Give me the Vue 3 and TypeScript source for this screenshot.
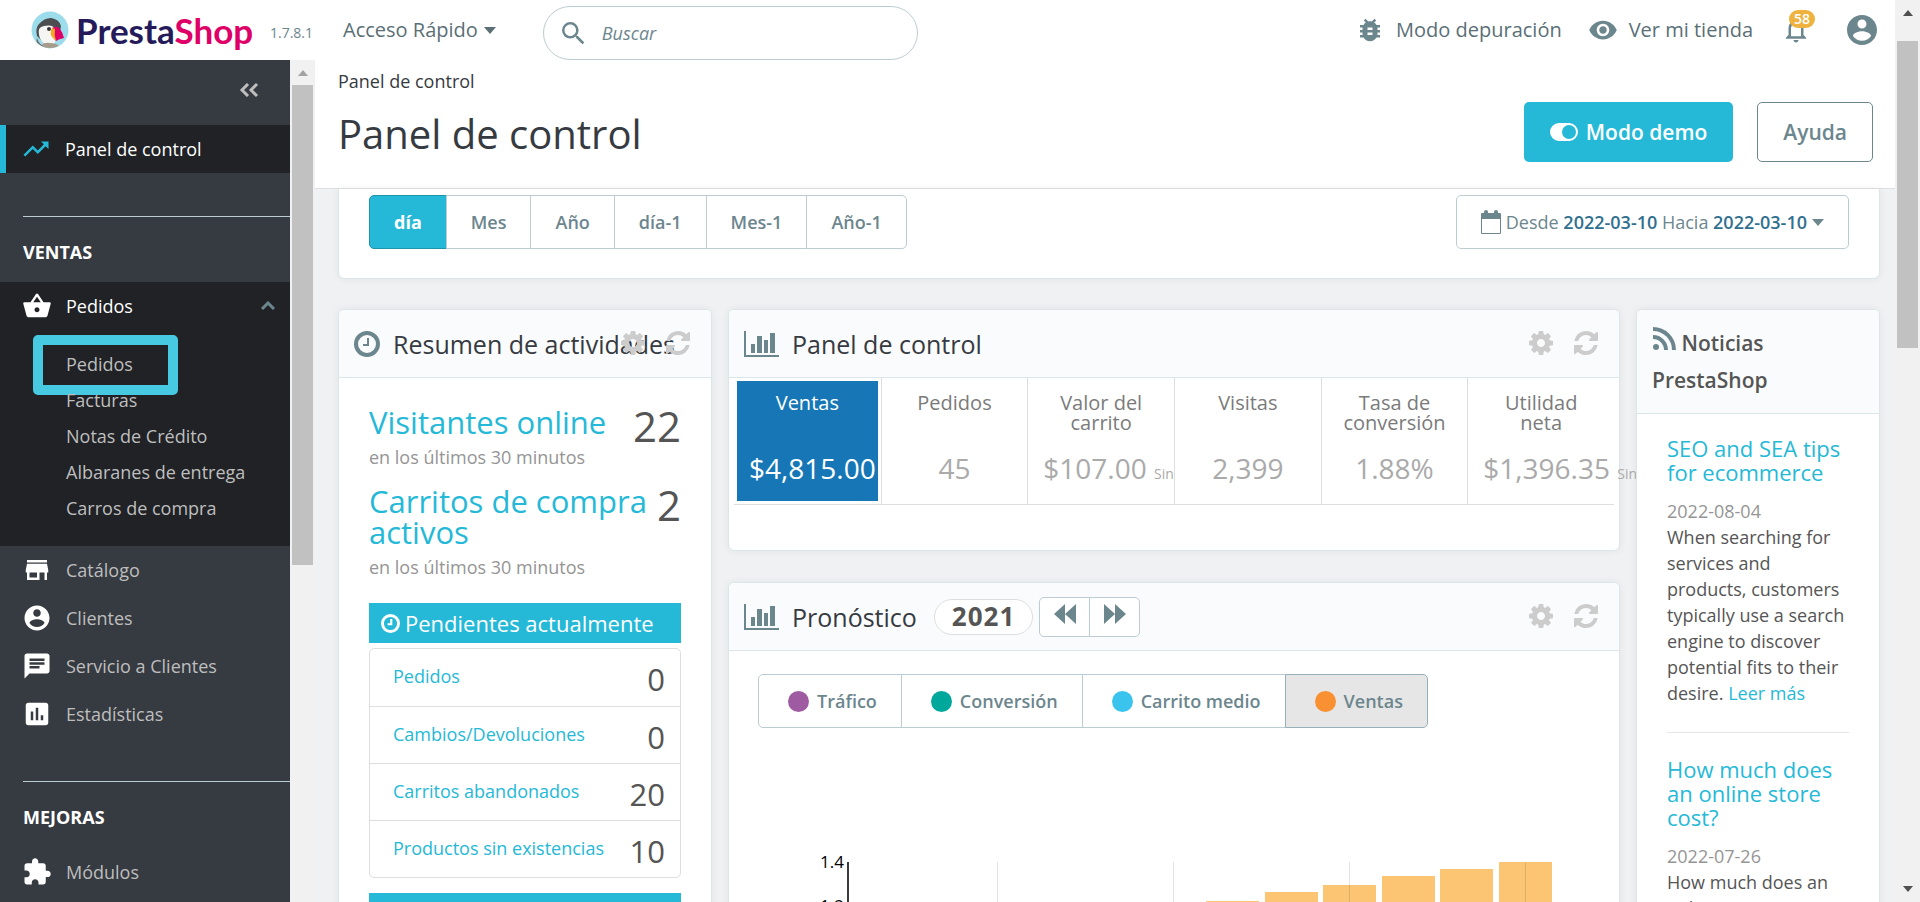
<script setup lang="ts">
interface MenuItem { label: string; icon: string }
interface Kpi { label: string; value: string; note?: string; active?: boolean }

const icons: Record<string, string> = {
  trending: 'M16 6l2.29 2.29-4.88 4.88-4-4L2 16.59 3.41 18l6-6 4 4 6.3-6.29L22 12V6z',
  basket: 'M17.21 9l-4.38-6.56c-.19-.28-.51-.42-.83-.42-.32 0-.64.14-.83.43L6.79 9H2c-.55 0-1 .45-1 1 0 .09.01.18.04.27l2.54 9.27c.23.84 1 1.46 1.92 1.46h13c.92 0 1.69-.62 1.93-1.46l2.54-9.27L23 10c0-.55-.45-1-1-1h-4.79zM9 9l3-4.4L15 9H9zm3 8c-1.1 0-2-.9-2-2s.9-2 2-2 2 .9 2 2-.9 2-2 2z',
  store: 'M20 4H4v2h16V4zm1 10v-2l-1-5H4l-1 5v2h1v6h10v-6h4v6h2v-6h1zm-9 4H6v-4h6v4z',
  account: 'M12 2C6.48 2 2 6.48 2 12s4.48 10 10 10 10-4.48 10-10S17.52 2 12 2zm0 3c1.66 0 3 1.34 3 3s-1.34 3-3 3-3-1.34-3-3 1.34-3 3-3zm0 14.2c-2.5 0-4.71-1.28-6-3.22.03-1.99 4-3.08 6-3.08 1.99 0 5.97 1.09 6 3.08-1.29 1.94-3.5 3.22-6 3.22z',
  chat: 'M20 2H4c-1.1 0-1.99.9-1.99 2L2 22l4-4h14c1.1 0 2-.9 2-2V4c0-1.1-.9-2-2-2zM6 9h12v2H6V9zm8 5H6v-2h8v2zm4-6H6V6h12v2z',
  stats: 'M19 3H5c-1.1 0-2 .9-2 2v14c0 1.1.9 2 2 2h14c1.1 0 2-.9 2-2V5c0-1.1-.9-2-2-2zM9 17H7v-7h2v7zm4 0h-2V7h2v10zm4 0h-2v-4h2v4z',
  module: 'M20.5 11H19V7c0-1.1-.9-2-2-2h-4V3.5C13 2.12 11.88 1 10.5 1S8 2.12 8 3.5V5H4c-1.1 0-1.99.9-1.99 2v3.8H3.5c1.49 0 2.7 1.21 2.7 2.7s-1.21 2.7-2.7 2.7H2V20c0 1.1.9 2 2 2h3.8v-1.5c0-1.49 1.21-2.7 2.7-2.7 1.49 0 2.7 1.21 2.7 2.7V22H17c1.1 0 2-.9 2-2v-4h1.5c1.38 0 2.5-1.12 2.5-2.5S21.88 11 20.5 11z',
  bug: 'M20 8h-2.81c-.45-.78-1.07-1.45-1.82-1.96L17 4.41 15.59 3l-2.17 2.17C12.96 5.06 12.49 5 12 5c-.49 0-.96.06-1.41.17L8.41 3 7 4.41l1.62 1.63C7.88 6.55 7.26 7.22 6.81 8H4v2h2.09c-.05.33-.09.66-.09 1v1H4v2h2v1c0 .34.04.67.09 1H4v2h2.81c1.04 1.79 2.97 3 5.19 3s4.15-1.21 5.19-3H20v-2h-2.09c.05-.33.09-.66.09-1v-1h2v-2h-2v-1c0-.34-.04-.67-.09-1H20V8zm-6 8h-4v-2h4v2zm0-4h-4v-2h4v2z',
  eye: 'M12 4.5C7 4.5 2.73 7.61 1 12c1.73 4.39 6 7.5 11 7.5s9.27-3.11 11-7.5c-1.73-4.39-6-7.5-11-7.5zM12 17c-2.76 0-5-2.24-5-5s2.24-5 5-5 5 2.24 5 5-2.24 5-5 5zm0-8c-1.66 0-3 1.34-3 3s1.34 3 3 3 3-1.34 3-3-1.34-3-3-3z',
  bell: 'M12 22c1.1 0 2-.9 2-2h-4c0 1.1.89 2 2 2zm6-6v-5c0-3.07-1.64-5.64-4.5-6.32V4c0-.83-.67-1.5-1.5-1.5s-1.5.67-1.5 1.5v.68C7.63 5.36 6 7.92 6 11v5l-2 2v1h16v-1l-2-2zm-2 1H8v-6c0-2.48 1.51-4.5 4-4.5s4 2.02 4 4.5v6z',
  search: 'M15.5 14h-.79l-.28-.27A6.471 6.471 0 0 0 16 9.5 6.5 6.5 0 1 0 9.5 16c1.61 0 3.09-.59 4.23-1.57l.27.28v.79l5 4.99L20.49 19l-4.99-5zm-6 0C7.01 14 5 11.99 5 9.5S7.01 5 9.5 5 14 7.01 14 9.5 11.99 14 9.5 14z',
}
const cog = 'M1024 896q0-106-75-181t-181-75-181 75-75 181 75 181 181 75 181-75 75-181zm512-109v222q0 12-8 23t-20 13l-185 28q-19 54-39 91 35 50 107 138 10 12 10 25t-9 23q-27 37-99 108t-94 71q-12 0-26-9l-138-108q-44 23-91 38-16 136-29 186-7 28-36 28h-222q-14 0-24.500-8.500t-11.500-21.500l-28-184q-49-16-90-37l-141 107q-10 9-25 9-14 0-25-11-126-114-165-168-7-10-7-23 0-12 8-23 15-21 51-66.500t54-70.500q-27-50-41-99l-183-27q-13-2-21-12.500t-8-23.500v-222q0-12 8-23t19-13l186-28q14-46 39-92-40-57-107-138-10-12-10-24 0-10 9-23 26-36 98.500-107.500t94.500-71.500q13 0 26 10l138 107q44-23 91-38 16-136 29-186 7-28 36-28h222q14 0 24.500 8.500t11.500 21.500l28 184q49 16 90 37l142-107q9-9 24-9 13 0 25 10 129 119 165 170 7 8 7 22 0 12-8 23-15 21-51 66.500t-54 70.500q26 50 41 98l183 28q13 2 21 12.500t8 23.500z'
const refresh = 'M1511 1056q0 5-1 7-64 268-268 434.500t-478 166.500q-146 0-282.500-55t-243.500-157l-129 129q-19 19-45 19t-45-19-19-45v-448q0-26 19-45t45-19h448q26 0 45 19t19 45-19 45l-137 137q71 66 161 102t187 36q134 0 250-65t186-179q11-17 53-117 8-23 30-23h192q13 0 22.500 9.500t9.500 22.500zm25-800v448q0 26-19 45t-45 19h-448q-26 0-45-19t-19-45 19-45l138-138q-148-137-349-137-134 0-250 65t-186 179q-11 17-53 117-8 23-30 23h-199q-13 0-22.500-9.500t-9.500-22.500v-7q65-268 270-434.500t480-166.500q146 0 284 55.500t245 156.500l130-129q19-19 45-19t45 19 19 45z'

const submenu = ['Pedidos', 'Facturas', 'Notas de Crédito', 'Albaranes de entrega', 'Carros de compra']
const sellMenu: MenuItem[] = [
  { label: 'Catálogo', icon: 'store' },
  { label: 'Clientes', icon: 'account' },
  { label: 'Servicio a Clientes', icon: 'chat' },
  { label: 'Estadísticas', icon: 'stats' },
]
const ranges = ['día', 'Mes', 'Año', 'día-1', 'Mes-1', 'Año-1']
const pending = [
  { label: 'Pedidos', count: 0 },
  { label: 'Cambios/Devoluciones', count: 0 },
  { label: 'Carritos abandonados', count: 20 },
  { label: 'Productos sin existencias', count: 10 },
]
const kpis: Kpi[] = [
  { label: 'Ventas', value: '$4,815.00', active: true },
  { label: 'Pedidos', value: '45' },
  { label: 'Valor del carrito', value: '$107.00', note: 'Sin' },
  { label: 'Visitas', value: '2,399' },
  { label: 'Tasa de conversión', value: '1.88%' },
  { label: 'Utilidad neta', value: '$1,396.35', note: 'Sin' },
]
const series = [
  { label: 'Tráfico', tone: 'purple' },
  { label: 'Conversión', tone: 'green' },
  { label: 'Carrito medio', tone: 'blue' },
  { label: 'Ventas', tone: 'orange' },
]
const chartTop = 30
const bars = [39, 30, 23, 14, 7, 0].map((drop, i) => ({ x: 448 + Math.round(i * 58.6), y: chartTop + drop }))
const gridLines = [239, 415, 591, 767]
const news = [
  { title: 'SEO and SEA tips for ecommerce', date: '2022-08-04', text: 'When searching for services and products, customers typically use a search engine to discover potential fits to their desire.', more: true },
  { title: 'How much does an online store cost?', date: '2022-07-26', text: 'How much does an online store cost?', more: false },
]
</script>

<template>
  <div class="screen">
    <div class="page">
      <header class="topbar">
        <a href="#" class="brand" aria-label="PrestaShop">
          <svg class="puffin" viewBox="0 0 38 38" aria-hidden="true">
            <defs><clipPath id="disc"><circle cx="19" cy="19" r="18" /></clipPath></defs>
            <circle cx="19" cy="19" r="18.500" fill="#9ddcea" />
            <g clip-path="url(#disc)">
              <path d="M6 25q-2-8 2-12 5-6 12-6 8 1 10 8l-1 6q-3 8-8 12h-7z" fill="#4b4d50" />
              <path d="M8 24q-2-8 5-9 9-2 13 4 1 9-4 15h-7q-6-4-7-10z" fill="#f5f5f3" />
              <path d="M10 35q2-4 9-3 6 0 9 3v3H9z" fill="#a79c8b" />
              <path d="M6 27q2 6 6 8l-4 1q-4-4-2-9z" fill="#6d6d6b" />
              <path d="M21 17q5-3 8 1 3 4 4 9-5 1-8 3-5-6-4-13z" fill="#df0067" />
              <path d="M21 17q-3 6 1 10l3 3q-2-6-1-12z" fill="#f5a623" />
            </g>
            <circle cx="18" cy="18" r="2" fill="#33343a" />
          </svg>
          <span class="wordmark">Presta<span class="pink">Shop</span></span>
        </a>
        <span class="version">1.7.8.1</span>
        <button type="button" class="quick">Acceso Rápido <span class="caret"></span></button>
        <label class="search">
          <svg viewBox="3 3 18 18" aria-hidden="true"><path :d="icons.search" /></svg>
          <input type="text" placeholder="Buscar" aria-label="Buscar" />
        </label>
        <nav class="tools">
          <a href="#" class="tool debug"><svg viewBox="0 0 24 24" aria-hidden="true"><path :d="icons.bug" /></svg>Modo depuración</a>
          <a href="#" class="tool shop"><svg viewBox="0 0 24 24" aria-hidden="true"><path :d="icons.eye" /></svg>Ver mi tienda</a>
          <button type="button" class="bell" aria-label="Notificaciones">
            <svg viewBox="0 0 24 24" aria-hidden="true"><path :d="icons.bell" /></svg>
            <span class="badge">58</span>
          </button>
          <button type="button" class="avatar" aria-label="Cuenta"><svg viewBox="2 2 20 20" aria-hidden="true"><path :d="icons.account" /></svg></button>
        </nav>
      </header>

      <div class="body">
        <aside class="sidebar">
          <button type="button" class="collapse" aria-label="Contraer menú">
            <svg viewBox="0 0 20 14" aria-hidden="true"><path d="M9 1L3 7l6 6M18 1l-6 6 6 6" /></svg>
          </button>
          <a href="#" class="item current"><svg class="ico" viewBox="0 0 24 24" aria-hidden="true"><path :d="icons.trending" /></svg>Panel de control</a>
          <h2 class="section">VENTAS</h2>
          <div class="open">
            <a href="#" class="item white"><svg class="ico" viewBox="0 0 24 24" aria-hidden="true"><path :d="icons.basket" /></svg>Pedidos
              <svg class="chevron" viewBox="0 0 16 10" aria-hidden="true"><path d="M2 8l6-6 6 6" /></svg>
            </a>
            <ul class="sub">
              <li v-for="(s, i) in submenu" :key="s"><a href="#">{{ s }}</a><span v-if="i === 0" class="marker"></span></li>
            </ul>
          </div>
          <a v-for="m in sellMenu" :key="m.label" href="#" class="item"><svg class="ico" viewBox="0 0 24 24" aria-hidden="true"><path :d="icons[m.icon]" /></svg>{{ m.label }}</a>
          <h2 class="section second">MEJORAS</h2>
          <a href="#" class="item"><svg class="ico" viewBox="0 0 24 24" aria-hidden="true"><path :d="icons.module" /></svg>Módulos</a>
        </aside>
        <div class="scroll side" aria-hidden="true"><span class="arrow up pale"></span><span class="thumb"></span></div>

        <main class="main">
          <div class="pagehead">
            <div>
              <div class="crumb">Panel de control</div>
              <h1>Panel de control</h1>
            </div>
            <div class="actions">
              <button type="button" class="btn primary">
                <svg viewBox="0 0 28 18" aria-hidden="true"><path fill-rule="evenodd" d="M9 0h10a9 9 0 0 1 0 18H9A9 9 0 0 1 9 0zm10 2a7 7 0 1 0 0 14 7 7 0 0 0 0-14z" /></svg>
                Modo demo
              </button>
              <button type="button" class="btn ghost">Ayuda</button>
            </div>
          </div>

          <div class="content">
            <section class="panel filter">
              <div class="group">
                <button v-for="(r, i) in ranges" :key="r" type="button" :class="{ on: i === 0 }">{{ r }}</button>
              </div>
              <button type="button" class="date">
                <svg viewBox="0 0 20 24" aria-hidden="true"><path fill-rule="evenodd" d="M1 3h18a1 1 0 0 1 1 1v19a1 1 0 0 1-1 1H1a1 1 0 0 1-1-1V4a1 1 0 0 1 1-1zm0 6v14h18V9z" /><rect x="3" y="0" width="4" height="6" rx="2" /><rect x="13" y="0" width="4" height="6" rx="2" /></svg>
                <span>Desde <strong>2022-03-10</strong> Hacia <strong>2022-03-10</strong></span>
                <span class="caret"></span>
              </button>
            </section>

            <div class="columns">
              <section class="panel">
                <header class="phead">
                  <svg class="clock" viewBox="0 0 26 26" aria-hidden="true"><circle cx="13" cy="13" r="11" /><path d="M14 7v7H9" /></svg>
                  <h3>Resumen de actividades</h3>
                  <div class="pact">
                    <button type="button" aria-label="Configurar"><svg viewBox="0 128 1536 1536" aria-hidden="true"><path :d="cog" /></svg></button>
                    <button type="button" aria-label="Actualizar"><svg viewBox="0 128 1536 1536" aria-hidden="true"><path :d="refresh" /></svg></button>
                  </div>
                </header>
                <div class="activity">
                  <div class="stat">
                    <div><a href="#">Visitantes online</a><small>en los últimos 30 minutos</small></div><strong>22</strong>
                  </div>
                  <div class="stat">
                    <div><a href="#">Carritos de compra activos</a><small>en los últimos 30 minutos</small></div><strong>2</strong>
                  </div>
                  <h4 class="bar">
                    <svg class="clock" viewBox="0 0 26 26" aria-hidden="true"><circle cx="13" cy="13" r="11" /><path d="M14 7v7H9" /></svg>Pendientes actualmente
                  </h4>
                  <ul class="list">
                    <li v-for="p in pending" :key="p.label"><a href="#">{{ p.label }}</a><span>{{ p.count }}</span></li>
                  </ul>
                  <h4 class="bar"></h4>
                </div>
              </section>

              <div class="middle">
                <section class="panel">
                  <header class="phead">
                    <svg class="chartico" viewBox="0 0 35 26" aria-hidden="true"><path d="M0 0h2v24h33v2H0zM7 13h4v9H7zM13 5h5v17h-5zM20 9h4v13h-4zM26 2h5v20h-5z" /></svg>
                    <h3>Panel de control</h3>
                    <div class="pact">
                      <button type="button" aria-label="Configurar"><svg viewBox="0 128 1536 1536" aria-hidden="true"><path :d="cog" /></svg></button>
                      <button type="button" aria-label="Actualizar"><svg viewBox="0 128 1536 1536" aria-hidden="true"><path :d="refresh" /></svg></button>
                    </div>
                  </header>
                  <dl class="kpis">
                    <div v-for="k in kpis" :key="k.label" class="cell">
                      <div class="kpi" :class="{ on: k.active }">
                        <dt>{{ k.label }}</dt>
                        <dd>{{ k.value }} <small v-if="k.note">{{ k.note }}</small></dd>
                      </div>
                    </div>
                  </dl>
                </section>

                <section class="panel">
                  <header class="phead">
                    <svg class="chartico" viewBox="0 0 35 26" aria-hidden="true"><path d="M0 0h2v24h33v2H0zM7 13h4v9H7zM13 5h5v17h-5zM20 9h4v13h-4zM26 2h5v20h-5z" /></svg>
                    <h3>Pronóstico</h3>
                    <span class="year">2021</span>
                    <div class="pager">
                      <button type="button" aria-label="Año anterior"><svg viewBox="0 0 22 20" aria-hidden="true"><path d="M11 0v20L0 10zM22 0v20L11 10z" /></svg></button>
                      <button type="button" aria-label="Año siguiente"><svg viewBox="0 0 22 20" aria-hidden="true"><path d="M0 0v20l11-10zM11 0v20l11-10z" /></svg></button>
                    </div>
                    <div class="pact">
                      <button type="button" aria-label="Configurar"><svg viewBox="0 128 1536 1536" aria-hidden="true"><path :d="cog" /></svg></button>
                      <button type="button" aria-label="Actualizar"><svg viewBox="0 128 1536 1536" aria-hidden="true"><path :d="refresh" /></svg></button>
                    </div>
                  </header>
                  <div class="forecast">
                    <div class="tabs">
                      <button v-for="s in series" :key="s.label" type="button" :class="{ on: s.tone === 'orange' }"><i :class="s.tone"></i>{{ s.label }}</button>
                    </div>
                    <svg class="chart" viewBox="0 0 832 260" role="img" aria-label="Ventas por mes">
                      <text x="86" y="36" text-anchor="end">1.4</text>
                      <text x="86" y="80" text-anchor="end">1.2</text>
                      <rect v-for="b in bars" :key="b.x" :x="b.x" :y="b.y" width="53" height="230" fill="#fbc573" />
                      <rect v-for="g in gridLines" :key="g" :x="g" :y="chartTop" width="1" height="230" fill="#000" fill-opacity="0.11" />
                      <rect x="89" :y="chartTop" width="2" height="230" fill="#3a3a3e" />
                    </svg>
                  </div>
                </section>
              </div>

              <section class="panel news">
                <header class="nhead">
                  <h3><svg viewBox="0 0 24 24" aria-hidden="true"><circle cx="4" cy="20" r="3" /><path d="M1 10a13 13 0 0 1 13 13M1 2a21 21 0 0 1 21 21" /></svg> Noticias PrestaShop</h3>
                </header>
                <article v-for="n in news" :key="n.date">
                  <h4><a href="#">{{ n.title }}</a></h4>
                  <time>{{ n.date }}</time>
                  <p>{{ n.text }} <a v-if="n.more" href="#">Leer más</a></p>
                </article>
              </section>
            </div>
          </div>
        </main>
      </div>
    </div>
    <div class="scroll win" aria-hidden="true"><span class="arrow up"></span><span class="thumb"></span><span class="arrow down"></span></div>
  </div>
</template>

<style>
body { margin: 0; overflow: hidden; }
</style>

<style scoped>
* { box-sizing: border-box; }
.screen { display: flex; height: 100vh; overflow: hidden; font-family: "Open Sans", "Noto Sans", sans-serif; font-size: 18px; line-height: 24px; color: #363a41; background: #eff1f2; }
.page { flex: 1; min-width: 0; display: flex; flex-direction: column; }
a { color: #25b9d7; text-decoration: none; }
button { font: inherit; color: inherit; background: none; border: 0; padding: 0; margin: 0; cursor: pointer; }
h1, h2, h3, h4, p, ul, dl, dd { margin: 0; padding: 0; font-weight: 400; }
ul { list-style: none; }
svg { display: block; fill: currentColor; flex: none; }

.topbar { display: flex; align-items: center; height: 60px; background: #fff; flex: none; color: #6c868e; padding-right: 18px; }
.brand { display: flex; align-items: center; gap: 7px; margin-left: 31px; }
.puffin { width: 38px; height: 38px; }
.wordmark { font-family: Lato, sans-serif; font-weight: 700; font-size: 35px; line-height: 44px; color: #251b5b; width: 180px; white-space: nowrap; }
.pink { color: #df0067; }
.version { margin-left: 14px; width: 45px; font-size: 14px; padding-top: 6px; }
.quick { margin-left: 28px; color: #5a6f76; font-size: 20px; display: flex; align-items: center; gap: 6px; white-space: nowrap; }
.caret { display: inline-block; border: 6px solid transparent; border-top: 7px solid currentColor; border-bottom: 0; }
.search { display: flex; align-items: center; margin-left: 47px; width: 375px; height: 54px; margin-top: 6px; border: 1px solid #bbcdd2; border-radius: 27px; padding: 0 18px; gap: 17px; }
.search svg { width: 23px; height: 23px; }
.search input { border: 0; outline: 0; font: italic 18px/24px "Open Sans", sans-serif; flex: 1; min-width: 0; padding: 0; background: none; }
.search input::placeholder { color: #6c868e; opacity: 1; }
.tools { margin-left: auto; display: flex; align-items: center; }
.tool { display: flex; align-items: center; color: #5a6f76; font-size: 20px; white-space: nowrap; }
.tool svg { color: #6c868e; }
.debug svg { width: 30px; height: 30px; margin-right: 11px; }
.shop { margin-left: 26px; }
.shop svg { width: 30px; height: 30px; margin-right: 11px; }
.bell { position: relative; margin-left: 28px; }
.bell svg { width: 30px; height: 30px; }
.badge { position: absolute; left: 8px; top: -5px; background: #f0b23f; color: #fff; border-radius: 9px; font-size: 14px; font-weight: 600; line-height: 18px; width: 26px; }
.avatar svg { width: 30px; height: 30px; }
.avatar { margin-left: 36px; }

.body { flex: 1; min-height: 0; display: flex; }
.sidebar { width: 290px; flex: none; background: #363a41; overflow: hidden; }
.collapse { display: block; margin: 23px 31px 28px auto; }
.collapse svg { width: 20px; height: 14px; fill: none; stroke: #bebebe; stroke-width: 3; }
.item { display: flex; align-items: center; height: 48px; padding-left: 22px; color: #bebebe; }
.ico { width: 30px; height: 30px; margin-right: 14px; color: #fff; }
.current { background: #202226; color: #fff; border-left: 6px solid #25b9d7; padding-left: 15px; }
.current .ico { color: #25b9d7; }
.section { margin: 43px 0 18px 23px; border-top: 1px solid #bbcdd2; padding-top: 23px; color: #fff; font-weight: 700; font-size: 18px; }
.second { margin-bottom: 19px; }
.open { background: #202226; padding-bottom: 13px; }
.white { color: #fff; }
.chevron { width: 16px; height: 10px; margin-left: auto; margin-right: 14px; fill: none; stroke: #6c868e; stroke-width: 3; }
.sub { padding: 16px 0 7px 66px; }
.sub li { position: relative; }
.sub a { display: block; color: #bebebe; line-height: 36px; }
.marker { position: absolute; left: -33px; top: -11px; width: 145px; height: 60px; border: 10px solid #47cae1; border-radius: 5px; }

.scroll { width: 25px; flex: none; background: #f1f1f1; display: flex; flex-direction: column; align-items: center; }
.thumb { width: 21px; background: #c1c1c1; }
.arrow { border: 5px solid transparent; }
.up { border-bottom: 6px solid #505050; border-top: 0; }
.down { border-top: 6px solid #505050; border-bottom: 0; margin-top: auto; margin-bottom: 10px; }
.pale { border-bottom-color: #a3a3a3; }
.win .up { margin: 10px 0 25px; }
.win .thumb { height: 34vh; }
.side .up { margin: 10px 0 9px; }
.side .thumb { height: 57%; }

.main { flex: 1; min-width: 0; display: flex; flex-direction: column; }
.pagehead { flex: none; height: 129px; background: #fff; border-bottom: 1px solid #dfdfdf; display: flex; justify-content: space-between; padding: 9px 22px 0 23px; }
h1 { font-size: 40px; line-height: 54px; margin-top: 14px; }
.actions { display: flex; gap: 24px; margin-top: 33px; }
.btn { height: 60px; border-radius: 5px; font-size: 21px; font-weight: 600; display: flex; align-items: center; padding: 0 25px; gap: 8px; white-space: nowrap; }
.primary { background: #25b9d7; color: #fff; padding: 0 26px; }
.primary svg { width: 28px; height: 18px; }
.ghost { border: 1px solid #6c868e; color: #6c868e; }

.content { flex: 1; min-height: 0; padding: 0 15px 0 23px; }
.panel { background: #fff; border: 1px solid #dbe6e9; border-radius: 6px; box-shadow: 0 0 8px rgba(0, 0, 0, 0.06); }
.filter { height: 90px; border-top: 0; border-radius: 0 0 6px 6px; display: flex; justify-content: space-between; padding: 6px 30px 30px; margin-bottom: 30px; }
.group, .tabs, .pager { display: flex; }
.group button, .tabs button, .date { height: 54px; border: 1px solid #bbcdd2; color: #6c868e; font-size: 18px; font-weight: 600; background: #fff; white-space: nowrap; }
.group button { padding: 0 24px; }
.group button + button, .tabs button + button, .pager button + button { margin-left: -1px; }
.group button:first-child, .tabs button:first-child, .pager button:first-child { border-radius: 5px 0 0 5px; }
.group button:last-child, .tabs button:last-child, .pager button:last-child { border-radius: 0 5px 5px 0; }
.group .on { background: #25b9d7; border-color: #1e94ab; color: #fff; font-weight: 700; }
.date { border-radius: 5px; display: flex; align-items: center; padding: 0 24px; gap: 5px; font-weight: 400; }
.date strong { color: #31708f; font-weight: 600; }
.date svg { width: 20px; height: 24px; }

.columns { display: grid; grid-template-columns: 374fr 892fr 244fr; gap: 16px; align-items: start; }
.columns > * { min-width: 0; }
.phead { position: relative; height: 68px; display: flex; align-items: center; background: #fafbfc; border-bottom: 1px solid #dbe6e9; border-radius: 5px 5px 0 0; padding: 0 15px; }
.phead h3 { font-size: 25px; white-space: nowrap; }
.clock { width: 26px; height: 26px; fill: none; stroke: #6c868e; stroke-width: 4; margin-right: 13px; }
.clock path { stroke-width: 2; }
.chartico { width: 35px; height: 26px; color: #6c868e; margin-right: 13px; }
.pact { position: absolute; right: 21px; top: 21px; display: flex; gap: 21px; color: #ccc; }
.pact svg { width: 24px; height: 24px; }
.activity { padding: 29px 30px 30px; }
.stat { display: flex; justify-content: space-between; margin-bottom: 17px; }
.stat a { display: block; font-size: 31px; line-height: 31px; }
.stat small { display: block; font-size: 18px; line-height: 24px; color: #959595; margin-top: 7px; }
.stat strong { font-weight: 400; font-size: 42px; line-height: 38px; color: #555; }
.bar { display: flex; align-items: center; height: 40px; background: #25b9d7; color: #fff; font-size: 22px; padding: 0 12px; margin-top: 24px; }
.bar .clock { width: 19px; height: 19px; stroke: #fff; margin-right: 5px; }
.bar .clock path { stroke-width: 3; }
.list { margin: 5px 0 15px; border: 1px solid #dedede; border-radius: 5px; }
.list + .bar { margin-top: 0; }
.list li { display: flex; justify-content: space-between; height: 57px; padding: 15px 15px 0 23px; }
.list li + li { border-top: 1px solid #dedede; }
.list span { font-size: 31px; line-height: 31px; color: #555; }

.middle { display: flex; flex-direction: column; gap: 31px; }
.kpis { display: grid; grid-template-columns: repeat(6, 1fr); margin: 0 5px 45px; border-bottom: 1px solid #dedede; }
.cell { min-width: 0; border-left: 1px solid #dedede; padding: 3px; }
.cell:first-child { border-left: 0; }
.kpi { height: 120px; padding: 12px; text-align: center; white-space: nowrap; color: #7b7b7b; }
.kpi dt { height: 48px; font-size: 20px; line-height: 20px; white-space: normal; }
.kpi dd { font-size: 28px; line-height: 32px; color: #aaa; margin-top: 11px; }
.kpi small { font-size: 14px; }
.kpi.on { background: #1777b6; color: #fff; }
.kpi.on dd { color: #fff; }
.year { margin-left: 17px; border: 1px solid #dedede; background: #fff; border-radius: 18px; height: 36px; line-height: 32px; padding: 0 17px; font-size: 26px; font-weight: 700; color: #555; letter-spacing: 1px; }
.pager { margin-left: 6px; }
.pager button { width: 51px; height: 40px; background: #fff; border: 1px solid #bbcdd2; color: #6c868e; display: flex; justify-content: center; padding-top: 6px; }
.pager svg { width: 22px; height: 20px; }
.forecast { padding: 23px 29px 0; height: 400px; }
.tabs button { display: flex; align-items: center; padding: 0 24px 0 29px; gap: 8px; }
.tabs i { width: 21px; height: 21px; border-radius: 50%; }
.tabs .on { background: #e6e6e6; border-color: #95b0b9; }
.purple { background: #9e5ba1; }
.green { background: #00a89c; }
.blue { background: #3ac4ed; }
.orange { background: #f99031; }
.chart { width: 100%; margin-top: 104px; }
.chart text { font-size: 17px; fill: #000; }

.nhead { background: #fafbfc; border-bottom: 1px solid #dbe6e9; border-radius: 5px 5px 0 0; padding: 15px 15px 14px; }
.nhead h3 { font-size: 21px; font-weight: 600; line-height: 37px; color: #555; }
.nhead svg { display: inline-block; width: 24px; height: 24px; fill: none; stroke: #6c868e; stroke-width: 4; }
.nhead circle { fill: #6c868e; stroke: none; }
.news article { margin: 0 30px; padding: 22px 0 26px; }
.news article + article { border-top: 1px solid #e6e6e6; padding-top: 24px; }
.news h4 { font-size: 22px; line-height: 24px; margin-bottom: 14px; }
.news time { display: block; color: #959595; line-height: 26px; }
.news p { color: #555; line-height: 26px; font-size: 18px; }
</style>
